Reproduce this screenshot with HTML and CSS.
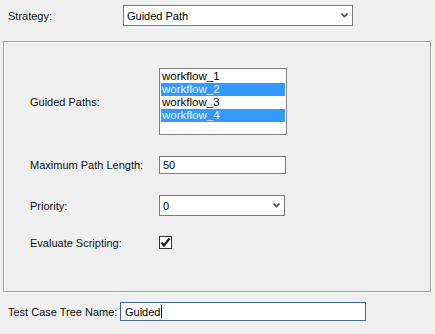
FILE: index.html
```html
<!DOCTYPE html>
<html lang="en">
<head>
  <meta charset="UTF-8">
  <title>Strategy</title>
  <link rel="stylesheet" href="styles.css">
</head>
<body>

<div class="fila fila-estrategia">
  <span class="etiqueta ancho-estrategia">Strategy:</span>
  <div class="combo combo-estrategia">
    <span>Guided Path</span>
    <svg class="flechita" width="7" height="5" viewBox="0 0 7 5"><path d="M0.5 0.5 L3.5 3.5 L6.5 0.5" fill="none" stroke="#4d4d4d" stroke-width="1.6"/></svg>
  </div>
</div>

<div class="panel">
  <div class="fila fila-lista">
    <span class="etiqueta ancho-panel">Guided Paths:</span>
    <div class="lista">
      <div class="item">workflow_1</div>
      <div class="item sel">workflow_2</div>
      <div class="item">workflow_3</div>
      <div class="item sel">workflow_4</div>
    </div>
  </div>

  <div class="fila fila-largo">
    <span class="etiqueta ancho-panel">Maximum Path Length:</span>
    <div class="campo campo-largo">50</div>
  </div>

  <div class="fila fila-prioridad">
    <span class="etiqueta ancho-panel">Priority:</span>
    <div class="combo combo-prioridad">
      <span>0</span>
      <svg class="flechita" width="7" height="5" viewBox="0 0 7 5"><path d="M0.5 0.5 L3.5 3.5 L6.5 0.5" fill="none" stroke="#4d4d4d" stroke-width="1.6"/></svg>
    </div>
  </div>

  <div class="fila fila-script">
    <span class="etiqueta ancho-panel">Evaluate Scripting:</span>
    <div class="check">
      <svg width="11" height="11" viewBox="0 0 11 11"><path d="M1.5 5.5 L4 8.5 L9.5 1.5" fill="none" stroke="#222" stroke-width="2.2"/></svg>
    </div>
  </div>
</div>

<div class="fila fila-nombre">
  <span class="etiqueta ancho-nombre">Test Case Tree Name:</span>
  <div class="campo campo-nombre">Guided<span class="cursor"></span></div>
</div>

</body>
</html>
```

FILE: styles.css
```css
body {
  margin: 0;
  width: 435px;
  height: 334px;
  background-color: #f0f0f0;
  font-family: 'Liberation Sans', Arial, sans-serif;
  font-size: 11px;
  color: #000;
  overflow: hidden;
}

.fila {
  display: flex;
  align-items: center;
}

.etiqueta {
  flex-shrink: 0;
  color: #111;
}

.ancho-estrategia { width: 115px; }
.ancho-panel { width: 129px; }
.ancho-nombre { width: 112px; }

.fila-estrategia {
  padding: 5px 0 0 8px;
  height: 21px;
}

.combo {
  box-sizing: border-box;
  display: flex;
  align-items: center;
  justify-content: space-between;
  background-color: #fff;
  border: 1px solid #7a7a7a;
  padding: 0 4px 0 3px;
}

.combo-estrategia {
  width: 230px;
  height: 21px;
}

.flechita {
  display: block;
}

.panel {
  box-sizing: border-box;
  margin: 15px 0 0 3px;
  width: 428px;
  height: 251px;
  border: 1px solid #a0a0a0;
  box-shadow: inset 1px 1px 0 #fff, 1px 1px 0 #fff;
  padding: 26px 0 0 26px;
}

.lista {
  box-sizing: border-box;
  width: 128px;
  height: 67px;
  background-color: #fff;
  border: 1px solid #828282;
  padding: 1px 1px;
}

.item {
  height: 13px;
  line-height: 13px;
  padding-left: 1px;
  font-size: 11.5px;
}

.item.sel {
  background-color: #3399ff;
  color: #eef4ff;
}

.campo {
  box-sizing: border-box;
  display: flex;
  align-items: center;
  background-color: #fff;
  border: 1px solid #7a7a7a;
  padding-left: 3px;
}

.fila-largo {
  margin-top: 21px;
}

.campo-largo {
  width: 127px;
  height: 18px;
}

.fila-prioridad {
  margin-top: 21px;
}

.combo-prioridad {
  width: 126px;
  height: 21px;
}

.fila-script {
  margin-top: 20px;
}

.check {
  box-sizing: border-box;
  width: 13px;
  height: 13px;
  background-color: #fff;
  border: 1px solid #333;
  display: flex;
  align-items: center;
  justify-content: center;
}

.fila-nombre {
  padding: 10px 0 0 8px;
}

.campo-nombre {
  width: 246px;
  height: 19px;
  border-color: #3c6a96;
  padding-left: 4px;
}

.cursor {
  display: inline-block;
  width: 1px;
  height: 13px;
  background-color: #000;
  margin-left: 1px;
}
```
